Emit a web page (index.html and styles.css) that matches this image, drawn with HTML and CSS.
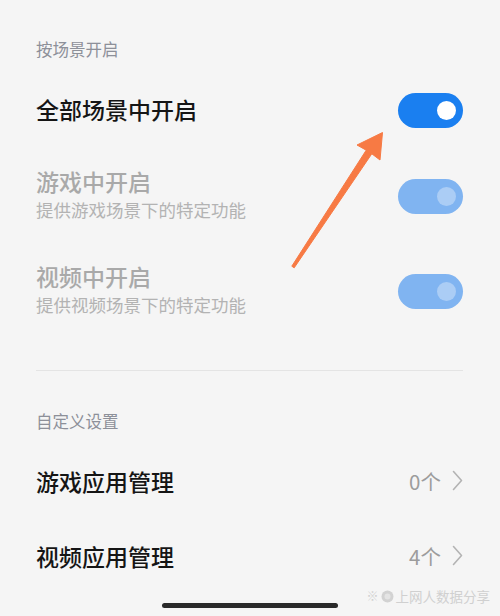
FILE: index.html
```html
<!DOCTYPE html>
<html lang="zh-CN">
<head>
<meta charset="utf-8">
<title>按场景开启</title>
<link rel="stylesheet" href="styles.css">
</head>
<body>
<div class="page">
  <div class="group-title">按场景开启</div>

  <div class="row main-row">
    <div class="label strong">全部场景中开启</div>
    <div class="switch on"><span class="knob"></span></div>
  </div>

  <div class="row sub-row first">
    <div class="texts">
      <div class="label muted">游戏中开启</div>
      <div class="desc">提供游戏场景下的特定功能</div>
    </div>
    <div class="switch disabled"><span class="knob"></span></div>
  </div>

  <div class="row sub-row second">
    <div class="texts">
      <div class="label muted">视频中开启</div>
      <div class="desc">提供视频场景下的特定功能</div>
    </div>
    <div class="switch disabled"><span class="knob"></span></div>
  </div>

  <div class="divider"></div>

  <div class="group-title second-title">自定义设置</div>

  <div class="row main-row">
    <div class="label strong">游戏应用管理</div>
    <div class="value">0个<svg class="chev" width="11" height="21" viewBox="0 0 11 21"><path d="M1.5 1.5 L9.5 10.5 L1.5 19.5" fill="none" stroke="#b3b3b3" stroke-width="1.6" stroke-linecap="round" stroke-linejoin="round"/></svg></div>
  </div>

  <div class="row last-row">
    <div class="label strong">视频应用管理</div>
    <div class="value">4个<svg class="chev" width="11" height="21" viewBox="0 0 11 21"><path d="M1.5 1.5 L9.5 10.5 L1.5 19.5" fill="none" stroke="#b3b3b3" stroke-width="1.6" stroke-linecap="round" stroke-linejoin="round"/></svg></div>
  </div>

  <div class="home-bar"></div>
</div>

<svg class="arrow" width="500" height="616" viewBox="0 0 500 616">
  <polygon points="291.8,266.2 366.2,150.2 357,145 382.5,132.5 380,160 371.8,153.8 294.2,267.8" fill="#f77a44" stroke="#f77a44" stroke-width="1" stroke-linejoin="round"/>
</svg>

<div class="watermark"><span class="wm-mark">※</span><svg class="wm-icon" width="13" height="13" viewBox="0 0 13 13"><circle cx="6.5" cy="6.5" r="6" fill="#d2d2d2"/><circle cx="6.5" cy="6.5" r="3" fill="#e4e4e4"/></svg><span>上网人数据分享</span></div>
</body>
</html>
```

FILE: styles.css
```css
html, body {
  margin: 0;
  padding: 0;
}

body {
  width: 500px;
  height: 616px;
  background: #f5f5f5;
  font-family: "Noto Sans CJK SC", "Noto Sans", sans-serif;
  position: relative;
  overflow: hidden;
}

.page {
  padding: 30px 37px 0 36px;
  display: flex;
  flex-direction: column;
}

.group-title {
  height: 40px;
  line-height: 38px;
  font-size: 16.5px;
  color: #8d9099;
}

.second-title {
  margin-top: 31px;
}

.row {
  display: flex;
  align-items: center;
  justify-content: space-between;
}

.main-row {
  height: 80px;
}

.last-row {
  height: 70px;
}

.sub-row {
  height: 88px;
}

.sub-row.first {
  margin-top: 2px;
}

.sub-row.second {
  margin-top: 7px;
}

.texts {
  display: flex;
  flex-direction: column;
  padding-bottom: 3px;
}

.label {
  font-size: 23px;
  line-height: 30px;
}

.strong {
  color: #151515;
  font-weight: 500;
  padding-bottom: 3px;
}

.muted {
  color: #a9a9a9;
  font-weight: 500;
}

.desc {
  font-size: 17.5px;
  line-height: 27px;
  color: #b3b3b3;
}

.switch {
  width: 65px;
  height: 35px;
  border-radius: 18px;
  display: flex;
  align-items: center;
  justify-content: flex-end;
  padding-right: 7px;
  box-sizing: border-box;
}

.switch .knob {
  width: 19px;
  height: 19px;
  border-radius: 50%;
}

.switch.on {
  background: #1a7ff0;
}

.switch.on .knob {
  background: #ffffff;
}

.switch.disabled {
  background: #80b4f1;
}

.switch.disabled .knob {
  background: #abcdf5;
}

.divider {
  margin-top: 35px;
  height: 1px;
  background: #e4e4e4;
}

.value {
  display: flex;
  align-items: center;
  font-size: 20.5px;
  color: #9c9c9c;
  padding-bottom: 3px;
}

.chev {
  margin-left: 11px;
}

.home-bar {
  margin: 11px auto 0;
  width: 176px;
  height: 5px;
  border-radius: 3px;
  background: #2a2a2a;
}

.arrow {
  position: absolute;
  left: 0;
  top: 0;
  pointer-events: none;
}

.watermark {
  position: absolute;
  right: 10px;
  top: 588px;
  display: flex;
  align-items: center;
  gap: 2px;
  font-size: 13.5px;
  line-height: 16px;
  color: #d0d0d0;
}

.wm-mark {
  font-size: 12px;
}
```
